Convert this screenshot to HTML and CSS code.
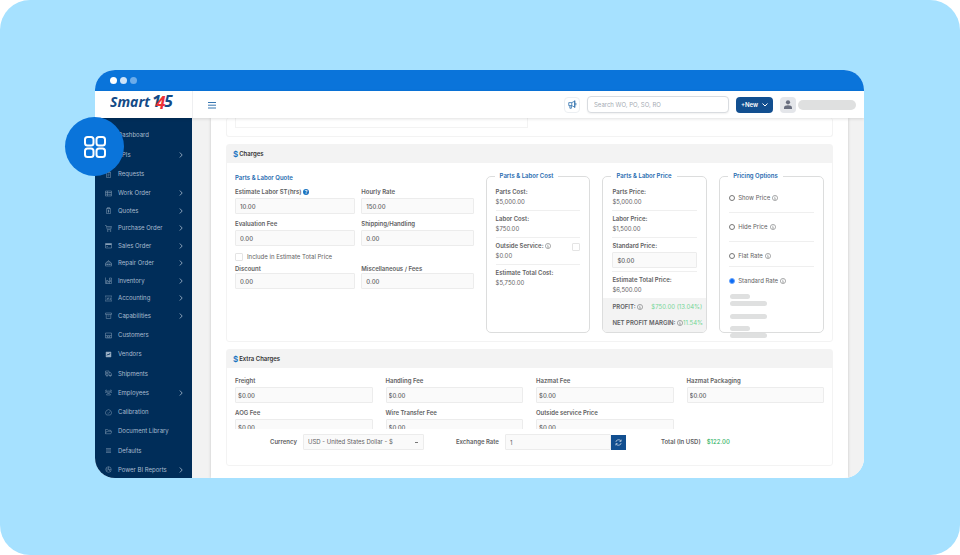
FILE: index.html
```
<!DOCTYPE html>
<html lang="en">
<head>
    <meta charset="UTF-8">
    <meta name="viewport" content="width=device-width, initial-scale=1.0">
    <title>Smart 145 - Charges</title>
    <link rel="stylesheet" href="styles.css">
</head>
<body>
    <!-- Icons -->
    <svg class="sprite" aria-hidden="true">
        <symbol id="i-chevron" viewBox="0 0 4 6"><path d="M.8.5 3.2 3 .8 5.500"/></symbol>
        <symbol id="i-info" viewBox="0 0 12 12"><circle cx="6" cy="6" r="5.200"/><path d="M5 5.200h1v3.300M4.800 8.600h2.600M6 2.800v1"/></symbol>
        <symbol id="i-gauge" viewBox="0 0 14 14"><path d="M3 12a6 6 0 1 1 8 0zM7 9l3-4M4 8h1"/></symbol>
        <symbol id="i-chart" viewBox="0 0 14 14"><path d="M1 1v12h12M4 10V7M7 10V4M10 10V6"/></symbol>
        <symbol id="i-request" viewBox="0 0 14 14"><path d="M3 2h8v11H3zM5 1h4v2H5zM5 6h4M5 8h4M5 10h3"/></symbol>
        <symbol id="i-work" viewBox="0 0 14 14"><path d="M1 2h12v10H1zM1 5h12M1 8.500h12M5 2v10M9 5h2M9 10h2"/></symbol>
        <symbol id="i-quote" viewBox="0 0 14 14"><path d="M3 3h8v10H3zM5 1h4v3H5zM7 6v5M8.500 7H6v1.500h2V10H5.500"/></symbol>
        <symbol id="i-cart" viewBox="0 0 14 14"><path d="M0 1h2.500l2 8h7l1.500-6H3.500M5 6h7"/><circle cx="5.500" cy="12" r="1"/><circle cx="11" cy="12" r="1"/></symbol>
        <symbol id="i-card" viewBox="0 0 14 14"><path d="M1 3h12v9H1z"/><path d="M1 4.500h12" stroke-width="3"/><path d="M3 9h3"/></symbol>
        <symbol id="i-repair" viewBox="0 0 14 14"><path d="M1 6h12v6H1zM3 6l1-3h6l1 3M1 9h12M5 8v2M9 8v2M6 1h2"/></symbol>
        <symbol id="i-inventory" viewBox="0 0 14 14"><path d="M1 1v12h12V2H9v11M3 13V7h3v6M6 9h3M11 5v5"/></symbol>
        <symbol id="i-account" viewBox="0 0 14 14"><path d="M0 2h14v10H0zM3 6h2v3H3M7 5v4M9 6h2.500v3H9"/></symbol>
        <symbol id="i-box" viewBox="0 0 14 14"><path d="M1 2h12v3H1zM2.500 5v8h9V5M5 8h4"/></symbol>
        <symbol id="i-customer" viewBox="0 0 14 14"><path d="M1 2h12v10H1zM1 7h12M4 12V9h2v3M8 12V9h2v3"/></symbol>
        <symbol id="i-vendor" viewBox="0 0 14 14"><path d="M2 2h10v10H2z" fill="#c3d2e2"/><path d="m4 9 2-3 2 2 2-4" stroke="#002d59" stroke-width="1.500"/></symbol>
        <symbol id="i-ship" viewBox="0 0 14 14"><path d="M1 2h7v8H1zM8 5h3l2 3v3H8M3 4v4M5 4v4"/><circle cx="4" cy="11.500" r="1.300"/><circle cx="10.500" cy="11.500" r="1.300"/></symbol>
        <symbol id="i-people" viewBox="0 0 14 14"><circle cx="7" cy="6" r="2"/><circle cx="2.500" cy="3.500" r="1.500"/><circle cx="11.500" cy="3.500" r="1.500"/><path d="M3 12c0-4 8-4 8 0zM0 8c0-2 3-2 4-1M14 8c0-2-3-2-4-1"/></symbol>
        <symbol id="i-folder" viewBox="0 0 14 14"><path d="M1 11V3h4l1.500 1.500H11V6.500M1 11l2.500-4.500H14L11.500 11.500H1z"/></symbol>
        <symbol id="i-lines" viewBox="0 0 14 14"><path d="M2 3h10M2 5.700h10M2 8.400h10M2 11h10"/></symbol>
        <symbol id="i-pie" viewBox="0 0 14 14"><circle cx="7" cy="7" r="5.500"/><path d="M7 1.500V7l4 4M7 7h5M4 4v6"/></symbol>
    </svg>

    <div class="stage">
        <div class="frame">
            <div class="window">
                <div class="titlebar"><span></span><span></span><span></span></div>

                <header class="topbar">
                    <a class="logo" href="#" aria-label="Smart 145">
                        <svg viewBox="0 0 68 20" width="68" height="20">
                            <text x="0" y="14" class="logo-blue logo-name">Smart</text>
                            <text x="42" y="14" class="logo-blue logo-num">1</text>
                            <text x="54" y="14" class="logo-blue logo-num">5</text>
                            <text x="46" y="16" class="logo-red">4</text>
                        </svg>
                    </a>
                    <button class="menu-button" aria-label="Menu">
                        <svg viewBox="0 0 8 8" width="8" height="8"><path d="M0 1.500h8M0 4.200h8M0 7h8"/></svg>
                    </button>
                    <div class="tools">
                        <button class="news-button" aria-label="Announcements">
                            <svg viewBox="0 0 12 12" width="9" height="9"><path d="M1 3.500h4l4-2v8l-4-2H1zM5 3.500v4M2.500 7.500V11h2V7.500M9 .500v10M10.500 4v3"/></svg>
                        </button>
                        <input class="search" type="text" placeholder="Search WO, PO, SO, RO" aria-label="Search">
                        <button class="new-button">+New
                            <svg viewBox="0 0 6 4" width="6" height="4"><path d="M.5.500 3 3 5.500.500"/></svg>
                        </button>
                        <button class="avatar" aria-label="Account">
                            <svg viewBox="0 0 8 9" width="8" height="9"><circle cx="4" cy="2.300" r="2.100"/><path d="M0 9V7.500C0 4.500 8 4.500 8 7.500V9z"/></svg>
                        </button>
                        <span class="user-name"></span>
                    </div>
                </header>

                <div class="layout">
                    <nav class="sidebar">
                        <ul class="nav-top">
                            <li><a href="#"><svg><use href="#i-gauge"/></svg>Dashboard</a></li>
                            <li><a href="#"><svg><use href="#i-chart"/></svg>KPIs<svg class="chevron"><use href="#i-chevron"/></svg></a></li>
                            <li><a href="#"><svg><use href="#i-request"/></svg>Requests</a></li>
                        </ul>
                        <ul class="nav-orders">
                            <li><a href="#"><svg><use href="#i-work"/></svg>Work Order<svg class="chevron"><use href="#i-chevron"/></svg></a></li>
                            <li><a href="#"><svg><use href="#i-quote"/></svg>Quotes<svg class="chevron"><use href="#i-chevron"/></svg></a></li>
                            <li><a href="#"><svg><use href="#i-cart"/></svg>Purchase Order<svg class="chevron"><use href="#i-chevron"/></svg></a></li>
                            <li><a href="#"><svg><use href="#i-card"/></svg>Sales Order<svg class="chevron"><use href="#i-chevron"/></svg></a></li>
                            <li><a href="#"><svg><use href="#i-repair"/></svg>Repair Order<svg class="chevron"><use href="#i-chevron"/></svg></a></li>
                            <li><a href="#"><svg><use href="#i-inventory"/></svg>Inventory<svg class="chevron"><use href="#i-chevron"/></svg></a></li>
                            <li><a href="#"><svg><use href="#i-account"/></svg>Accounting<svg class="chevron"><use href="#i-chevron"/></svg></a></li>
                            <li><a href="#"><svg><use href="#i-box"/></svg>Capabilities<svg class="chevron"><use href="#i-chevron"/></svg></a></li>
                        </ul>
                        <ul class="nav-admin">
                            <li><a href="#"><svg><use href="#i-customer"/></svg>Customers</a></li>
                            <li><a href="#"><svg><use href="#i-vendor"/></svg>Vendors</a></li>
                            <li><a href="#"><svg><use href="#i-ship"/></svg>Shipments</a></li>
                            <li><a href="#"><svg><use href="#i-people"/></svg>Employees<svg class="chevron"><use href="#i-chevron"/></svg></a></li>
                            <li><a href="#"><svg><use href="#i-gauge"/></svg>Calibration</a></li>
                            <li><a href="#"><svg><use href="#i-folder"/></svg>Document Library</a></li>
                            <li><a href="#"><svg><use href="#i-lines"/></svg>Defaults</a></li>
                            <li><a href="#"><svg><use href="#i-pie"/></svg>Power BI Reports<svg class="chevron"><use href="#i-chevron"/></svg></a></li>
                        </ul>
                    </nav>

                    <main class="content">
                        <div class="page">
                            <section class="card card-previous"><div class="notes"></div></section>

                            <section class="card">
                                <h2><span class="dollar">$</span>Charges</h2>
                                <div class="charges">
                                    <div class="quote">
                                        <h3>Parts &amp; Labor Quote</h3>
                                        <div class="quote-grid">
                                            <div class="field">
                                                <label for="labor">Estimate Labor ST(hrs) <span class="help">?</span></label>
                                                <input type="text" id="labor" value="10.00">
                                            </div>
                                            <div class="field">
                                                <label for="rate">Hourly Rate</label>
                                                <input type="text" id="rate" value="150.00">
                                            </div>
                                            <div class="field">
                                                <label for="evaluation">Evaluation Fee</label>
                                                <input type="text" id="evaluation" value="0.00">
                                            </div>
                                            <div class="field">
                                                <label for="shipping">Shipping/Handling</label>
                                                <input type="text" id="shipping" value="0.00">
                                            </div>
                                        </div>
                                        <label class="include"><input type="checkbox">Include in Estimate Total Price</label>
                                        <div class="quote-grid compact">
                                            <div class="field">
                                                <label for="discount">Discount</label>
                                                <input type="text" id="discount" value="0.00">
                                            </div>
                                            <div class="field">
                                                <label for="misc">Miscellaneous / Fees</label>
                                                <input type="text" id="misc" value="0.00">
                                            </div>
                                        </div>
                                    </div>

                                    <fieldset class="box">
                                        <legend>Parts &amp; Labor Cost</legend>
                                        <div class="amount"><b>Parts Cost:</b><span>$5,000.00</span></div>
                                        <div class="amount"><b>Labor Cost:</b><span>$750.00</span></div>
                                        <div class="amount outside">
                                            <div><b>Outside Service: <svg class="info"><use href="#i-info"/></svg></b><span>$0.00</span></div>
                                            <input type="checkbox" aria-label="Outside Service">
                                        </div>
                                        <div class="amount"><b>Estimate Total Cost:</b><span>$5,750.00</span></div>
                                    </fieldset>

                                    <fieldset class="box">
                                        <legend>Parts &amp; Labor Price</legend>
                                        <div class="amount"><b>Parts Price:</b><span>$5,000.00</span></div>
                                        <div class="amount"><b>Labor Price:</b><span>$1,500.00</span></div>
                                        <div class="amount standard">
                                            <label for="standard">Standard Price:</label>
                                            <input type="text" id="standard" value="$0.00">
                                        </div>
                                        <div class="amount"><b>Estimate Total Price:</b><span>$6,500.00</span></div>
                                        <div class="profit">
                                            <div><b>PROFIT: <svg class="info"><use href="#i-info"/></svg></b><span>$750.00 (13.04%)</span></div>
                                            <div><b>NET PROFIT MARGIN: <svg class="info"><use href="#i-info"/></svg></b><span>11.54%</span></div>
                                        </div>
                                    </fieldset>

                                    <fieldset class="box">
                                        <legend>Pricing Options</legend>
                                        <div class="options">
                                            <label><input type="radio" name="pricing">Show Price <svg class="info"><use href="#i-info"/></svg></label>
                                            <label><input type="radio" name="pricing">Hide Price <svg class="info"><use href="#i-info"/></svg></label>
                                            <label class="short"><input type="radio" name="pricing">Flat Rate <svg class="info"><use href="#i-info"/></svg></label>
                                            <label><input type="radio" name="pricing" checked>Standard Rate <svg class="info"><use href="#i-info"/></svg></label>
                                        </div>
                                        <div class="skeleton">
                                            <i class="narrow"></i><i></i>
                                            <i class="single"></i>
                                            <i class="narrow"></i><i></i>
                                        </div>
                                    </fieldset>
                                </div>
                            </section>

                            <section class="card">
                                <h2><span class="dollar">$</span>Extra Charges</h2>
                                <div class="extra-grid">
                                    <div class="field">
                                        <label for="freight">Freight</label>
                                        <input type="text" id="freight" value="$0.00">
                                    </div>
                                    <div class="field">
                                        <label for="handling">Handling Fee</label>
                                        <input type="text" id="handling" value="$0.00">
                                    </div>
                                    <div class="field">
                                        <label for="hazmat">Hazmat Fee</label>
                                        <input type="text" id="hazmat" value="$0.00">
                                    </div>
                                    <div class="field">
                                        <label for="packaging">Hazmat Packaging</label>
                                        <input type="text" id="packaging" value="$0.00">
                                    </div>
                                    <div class="field">
                                        <label for="aog">AOG Fee</label>
                                        <input type="text" id="aog" value="$0.00">
                                    </div>
                                    <div class="field">
                                        <label for="wire">Wire Transfer Fee</label>
                                        <input type="text" id="wire" value="$0.00">
                                    </div>
                                    <div class="field">
                                        <label for="outside">Outside service Price</label>
                                        <input type="text" id="outside" value="$0.00">
                                    </div>
                                </div>
                                <div class="totals">
                                    <div class="currency">
                                        <label for="currency">Currency</label>
                                        <select id="currency">
                                            <option>USD - United States Dollar - $</option>
                                        </select>
                                    </div>
                                    <div class="exchange">
                                        <label for="exchange">Exchange Rate</label>
                                        <input type="text" id="exchange" value="1">
                                        <button aria-label="Refresh rate">
                                            <svg viewBox="0 0 12 12" width="7" height="7"><path d="M1.500 5a4.600 4.600 0 0 1 8.500-1.500M10.500 7A4.600 4.600 0 0 1 2 8.500M10.500 1v3h-3M1.500 11V8h3"/></svg>
                                        </button>
                                    </div>
                                    <div class="total"><b>Total (In USD)</b><span>$122.00</span></div>
                                </div>
                            </section>
                        </div>
                    </main>
                </div>
            </div>

            <div class="badge">
                <svg viewBox="0 0 24 24" width="24" height="24">
                    <rect x="2" y="2" width="8.500" height="8.500" rx="2.500"/>
                    <rect x="13.500" y="2" width="8.500" height="8.500" rx="2.500"/>
                    <rect x="2" y="13.500" width="8.500" height="8.500" rx="2.500"/>
                    <rect x="13.500" y="13.500" width="8.500" height="8.500" rx="2.500"/>
                </svg>
            </div>
        </div>
    </div>
</body>
</html>
```
FILE: styles.css
```
* {
    box-sizing: border-box;
}

body {
    margin: 0;
    background: #fff;
    color: #5f6163;
    font-family: Inter, "Liberation Sans", sans-serif;
    font-size: 6px;
    line-height: 8px;
}

input, button, select {
    font: inherit;
    color: inherit;
    margin: 0;
}

button {
    padding: 0;
    border: none;
    cursor: pointer;
}

svg {
    fill: none;
    stroke: currentColor;
}

.sprite {
    display: none;
}

.stage {
    min-height: 100vh;
    padding: 70px 96px 77px 95px;
    background: #a6e1ff;
    border-radius: 30px;
}

.frame {
    position: relative;
}

.window {
    overflow: hidden;
    border-radius: 20px;
    background: #fff;
}

.titlebar {
    display: flex;
    align-items: center;
    gap: 3px;
    height: 21px;
    padding-left: 15px;
    background: #0a74da;
}

.titlebar span {
    width: 7px;
    height: 7px;
    border-radius: 50%;
    background: #fff;
}

.titlebar span:nth-child(2) {
    background: #cee3f8;
}

.titlebar span:nth-child(3) {
    background: #6cacea;
}

/* Top bar */
.topbar {
    position: relative;
    display: flex;
    align-items: center;
    height: 27px;
    background: #fff;
    box-shadow: 0 1px 3px rgba(0, 0, 0, 0.12);
}

.logo {
    width: 98px;
    height: 27px;
    padding: 2px 0 0 15px;
    border-right: 1px solid #eeeff1;
}

.logo svg {
    display: block;
    stroke: none;
}

.logo text {
    font-family: "Open Sans", "Noto Sans", sans-serif;
    font-style: italic;
    font-weight: 700;
}

.logo-blue {
    fill: #124a86;
}

.logo-name {
    font-size: 14px;
}

.logo-num {
    font-size: 16px;
}

.logo-red {
    fill: #ee3135;
    font-size: 17px;
}

.menu-button {
    width: 8px;
    height: 8px;
    margin-left: 15px;
    background: none;
    color: #3776b0;
}

.menu-button svg {
    display: block;
}

.tools {
    display: flex;
    align-items: center;
    gap: 7px;
    margin-left: auto;
    padding-right: 8px;
}

.news-button, .avatar {
    display: flex;
    align-items: center;
    justify-content: center;
    width: 16px;
    height: 16px;
    border-radius: 4px;
}

.news-button {
    border: 1px solid #eceff2;
    background: #fff;
    color: #2368a8;
}

.search {
    width: 142px;
    height: 17px;
    padding: 0 6px;
    border: 1px solid #d9dce0;
    border-radius: 4px;
    box-shadow: 0 1px 2px rgba(0, 0, 0, 0.06);
}

.search::placeholder {
    color: #a5abb3;
}

.new-button {
    display: flex;
    align-items: center;
    justify-content: center;
    gap: 4px;
    width: 37px;
    height: 16px;
    border-radius: 4px;
    background: #124f90;
    color: #fff;
    font-weight: 600;
}

.avatar {
    background: #e4e6ea;
}

.avatar svg {
    fill: #6a6f80;
    stroke: none;
}

.user-name {
    width: 58px;
    height: 10px;
    margin-left: -5px;
    border-radius: 5px;
    background: #dfe0e0;
}

.layout {
    display: flex;
}

/* Sidebar */
.sidebar {
    flex: none;
    width: 97px;
    padding-top: 9px;
    background: #002d59;
    color: #a9bccf;
}

.sidebar ul {
    display: flex;
    flex-direction: column;
    justify-content: space-between;
    margin: 0;
    padding: 0;
    list-style: none;
}

.nav-top {
    height: 55px;
}

.sidebar .nav-orders {
    height: 139px;
    margin: 3px 0;
}

.nav-admin {
    height: 151px;
}

.sidebar a {
    display: flex;
    align-items: center;
    height: 16px;
    padding: 0 9px 0 10px;
    color: inherit;
    text-decoration: none;
}

.sidebar svg {
    width: 7px;
    height: 7px;
    margin-right: 6px;
    opacity: 0.8;
}

.sidebar .chevron {
    width: 4px;
    height: 6px;
    margin: 0 0 0 auto;
    stroke-width: 1px;
}

/* Page */
.content {
    flex: 1;
    min-width: 0;
    padding: 0 16px 0 19px;
    background: #f2f2f2;
}

.page {
    height: 100%;
    padding: 0 15px;
    background: #fff;
    box-shadow: 0 0 3px rgba(0, 0, 0, 0.18);
}

.card {
    margin-bottom: 7px;
    border: 1px solid #f3f3f3;
    border-radius: 3px;
}

.card-previous {
    height: 19px;
    padding-left: 8px;
    border-top: none;
}

.notes {
    width: 49%;
    height: 10px;
    border: 1px solid #f3f3f3;
    border-top: none;
}

.card h2 {
    display: flex;
    align-items: center;
    height: 18px;
    margin: 0;
    padding-left: 6px;
    background: #f3f3f3;
    color: #333;
    font-size: 6px;
    font-weight: 600;
}

.dollar {
    margin-right: 1px;
    color: #1a73c0;
    font-size: 8px;
}

.charges {
    display: flex;
    gap: 12px;
    padding: 9px 8px 8px;
}

.quote {
    flex: 1 1 239px;
    min-width: 0;
}

h3, legend {
    color: #1f6bb0;
    font-size: 6px;
    font-weight: 600;
}

.quote h3 {
    margin: 2px 0 6px;
}

.quote-grid {
    display: grid;
    grid-template-columns: 120fr 112fr;
    gap: 6px;
}

.field label, .totals label, .totals b, .amount b, .amount label, .profit b {
    font-weight: 600;
}

.field label {
    display: block;
    margin-bottom: 2px;
    white-space: nowrap;
}

.compact .field label {
    margin-bottom: 0;
}

.field input, .standard input, .exchange input, select {
    display: block;
    width: 100%;
    height: 16px;
    padding: 0 4px;
    border: 1px solid #ececec;
    border-radius: 1px;
    background: #fafafa;
}

.field input, .standard input {
    font-weight: 500;
}

.extra-grid .field input {
    padding: 0 2px;
}

.help {
    display: inline-block;
    width: 6px;
    height: 6px;
    border-radius: 50%;
    background: #1a73c0;
    color: #fff;
    font-size: 5px;
    line-height: 6px;
    text-align: center;
}

.include {
    display: flex;
    align-items: center;
    gap: 4px;
    height: 16px;
    margin: 3px 0 0;
}

input[type="checkbox"] {
    appearance: none;
    width: 8px;
    height: 8px;
    border: 1px solid #e4e4e4;
    border-radius: 1px;
    background: #fff;
}

/* Cost, price and option boxes */
.box {
    flex: 1 1 105px;
    min-width: 0;
    margin: 0;
    padding: 7px 0 0;
    border: 1px solid #dcdddd;
    border-radius: 5px;
}

.box legend {
    margin-left: 8px;
    padding: 0 5px;
}

.info {
    width: 6px;
    height: 6px;
    vertical-align: -1px;
}

.amount {
    height: 27px;
    margin: 0 9px;
    padding-top: 3px;
    border-bottom: 1px solid #efefef;
}

.amount:first-of-type {
    height: 24px;
    padding-top: 0;
}

.amount:last-of-type {
    border-bottom: none;
}

.amount b, .amount span, .amount label {
    display: block;
    line-height: 10px;
    white-space: nowrap;
}

.outside {
    display: flex;
    justify-content: space-between;
}

.outside input {
    margin-top: 2px;
}

.standard {
    height: 34px;
}

.standard label {
    margin-bottom: 1px;
}

.profit {
    margin-top: -1px;
    padding: 1px 4px 1px 9px;
    border-radius: 0 0 4px 4px;
    background: #f3f3f3;
}

.profit div {
    display: flex;
    align-items: center;
    justify-content: space-between;
    height: 16px;
    white-space: nowrap;
}

.profit span {
    color: #74d696;
}

.options label {
    display: flex;
    align-items: flex-start;
    gap: 2px;
    height: 29px;
    margin: 0 9px;
    padding-top: 10px;
    border-bottom: 1px solid #efefef;
}

.options label:first-child {
    height: 26px;
    padding-top: 7px;
}

.options .short {
    height: 25px;
}

.options label:last-child {
    height: 24px;
    border-bottom: none;
}

.options input {
    appearance: none;
    width: 6px;
    height: 6px;
    margin: 1px 1px 0 0;
    border: 1px solid #777;
    border-radius: 50%;
}

.options input:checked {
    border-color: #6aa5fb;
    background: #0b6bf5;
}

.options .info {
    margin-top: 1px;
}

.skeleton {
    display: flex;
    flex-direction: column;
    gap: 2px;
    margin: 3px 10px -6px;
}

.skeleton i {
    width: 37px;
    height: 5px;
    border-radius: 3px;
    background: #dfe0e0;
}

.skeleton .narrow {
    width: 20px;
}

.skeleton .single {
    margin: 6px 0 5px;
}

/* Extra charges */
.extra-grid {
    display: grid;
    grid-template-columns: repeat(4, 1fr);
    gap: 6px 13px;
    height: 61px;
    padding: 9px 8px 0;
    overflow: hidden;
}

.totals {
    display: flex;
    align-items: center;
    padding: 5px 8px 15px 43px;
}

.totals > div {
    display: flex;
    align-items: center;
}

.currency label {
    margin-right: 6px;
}

.currency select {
    width: 121px;
    appearance: none;
    background: #fafafa linear-gradient(#777, #777) no-repeat right 5px center / 3px 1px;
}

.exchange {
    margin-left: 32px;
}

.exchange label {
    margin-right: 6px;
}

.exchange input {
    width: 106px;
}

.exchange button {
    display: flex;
    align-items: center;
    justify-content: center;
    width: 15px;
    height: 15px;
    background: #124f90;
    color: #fff;
}

.total {
    gap: 6px;
    margin-left: 35px;
}

.total span {
    color: #2fb263;
    font-weight: 500;
}

.badge {
    position: absolute;
    top: 47px;
    left: -30px;
    display: flex;
    align-items: center;
    justify-content: center;
    width: 59px;
    height: 59px;
    border-radius: 50%;
    background: #0a74da;
    color: #fff;
}

.badge svg {
    stroke-width: 2;
}
```
